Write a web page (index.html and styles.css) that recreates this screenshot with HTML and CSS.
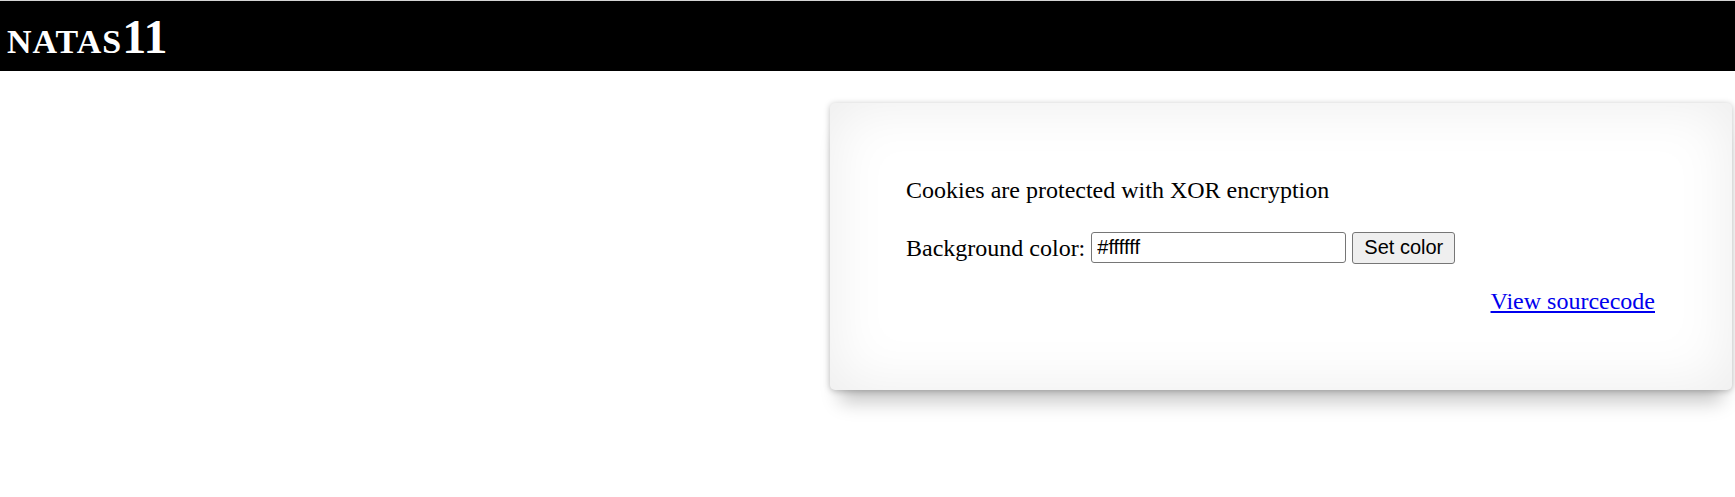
FILE: index.html
```html
<!DOCTYPE html>
<html>
<head>
<meta charset="utf-8">
<title>natas11</title>
<link rel="stylesheet" href="styles.css">
</head>
<body>
<h1 class="title">natas<span class="num">11</span></h1>
<div class="page">
  <div class="card">
    <p class="intro">Cookies are protected with XOR encryption</p>
    <form class="row">
      <span>Background color:</span>
      <input class="field" type="text" value="#ffffff">
      <button class="btn" type="button">Set color</button>
    </form>
    <div class="source"><a href="#">View sourcecode</a></div>
  </div>
</div>
</body>
</html>
```

FILE: styles.css
```css
html, body {
  margin: 0;
  padding: 0;
  background: #fff;
}
body {
  font-family: "Liberation Serif", "Times New Roman", serif;
  font-size: 24px;
  color: #000;
  border-top: 1px solid #d4d4d4;
}
.title {
  margin: 0;
  background: #000;
  color: #fff;
  font-family: "Liberation Serif", "Times New Roman", serif;
  font-size: 48px;
  font-weight: bold;
  font-variant: small-caps;
  letter-spacing: 1px;
  line-height: 55px;
  height: 70px;
  box-sizing: border-box;
  padding: 8px 7px 7px;
}
.num {
  letter-spacing: 0;
}
.page {
  display: flex;
  justify-content: flex-end;
  padding: 32px 3px 40px 0;
}
.card {
  width: 902px;
  height: 287px;
  box-sizing: border-box;
  padding: 73px 77px 0 76px;
  background: #fff;
  border-radius: 5px;
  box-shadow: 0 22px 18px -10px rgba(0,0,0,0.22),
              0 1px 6px rgba(0,0,0,0.25),
              inset 0 0 60px rgba(0,0,0,0.08);
}
.intro {
  margin: 0;
  line-height: 28px;
}
.row {
  margin: 28px 0 0;
  display: flex;
  align-items: center;
  height: 31px;
  line-height: 28px;
}
.field {
  margin: 0 0 0 6px;
  width: 255px;
  height: 31px;
  box-sizing: border-box;
  border: 1px solid #767676;
  border-radius: 3px;
  padding: 0 5px;
  font-family: "Liberation Sans", Arial, sans-serif;
  font-size: 20px;
  color: #000;
  background: #fff;
}
.btn {
  margin: 0 0 0 6px;
  width: 103px;
  height: 32px;
  box-sizing: border-box;
  border: 1px solid #767676;
  border-radius: 3px;
  background: #efefef;
  padding: 0;
  font-family: "Liberation Sans", Arial, sans-serif;
  font-size: 20px;
  color: #000;
}
.source {
  margin-top: 24px;
  text-align: right;
  line-height: 28px;
}
.source a {
  color: #0000ee;
  text-decoration: underline;
}
```
